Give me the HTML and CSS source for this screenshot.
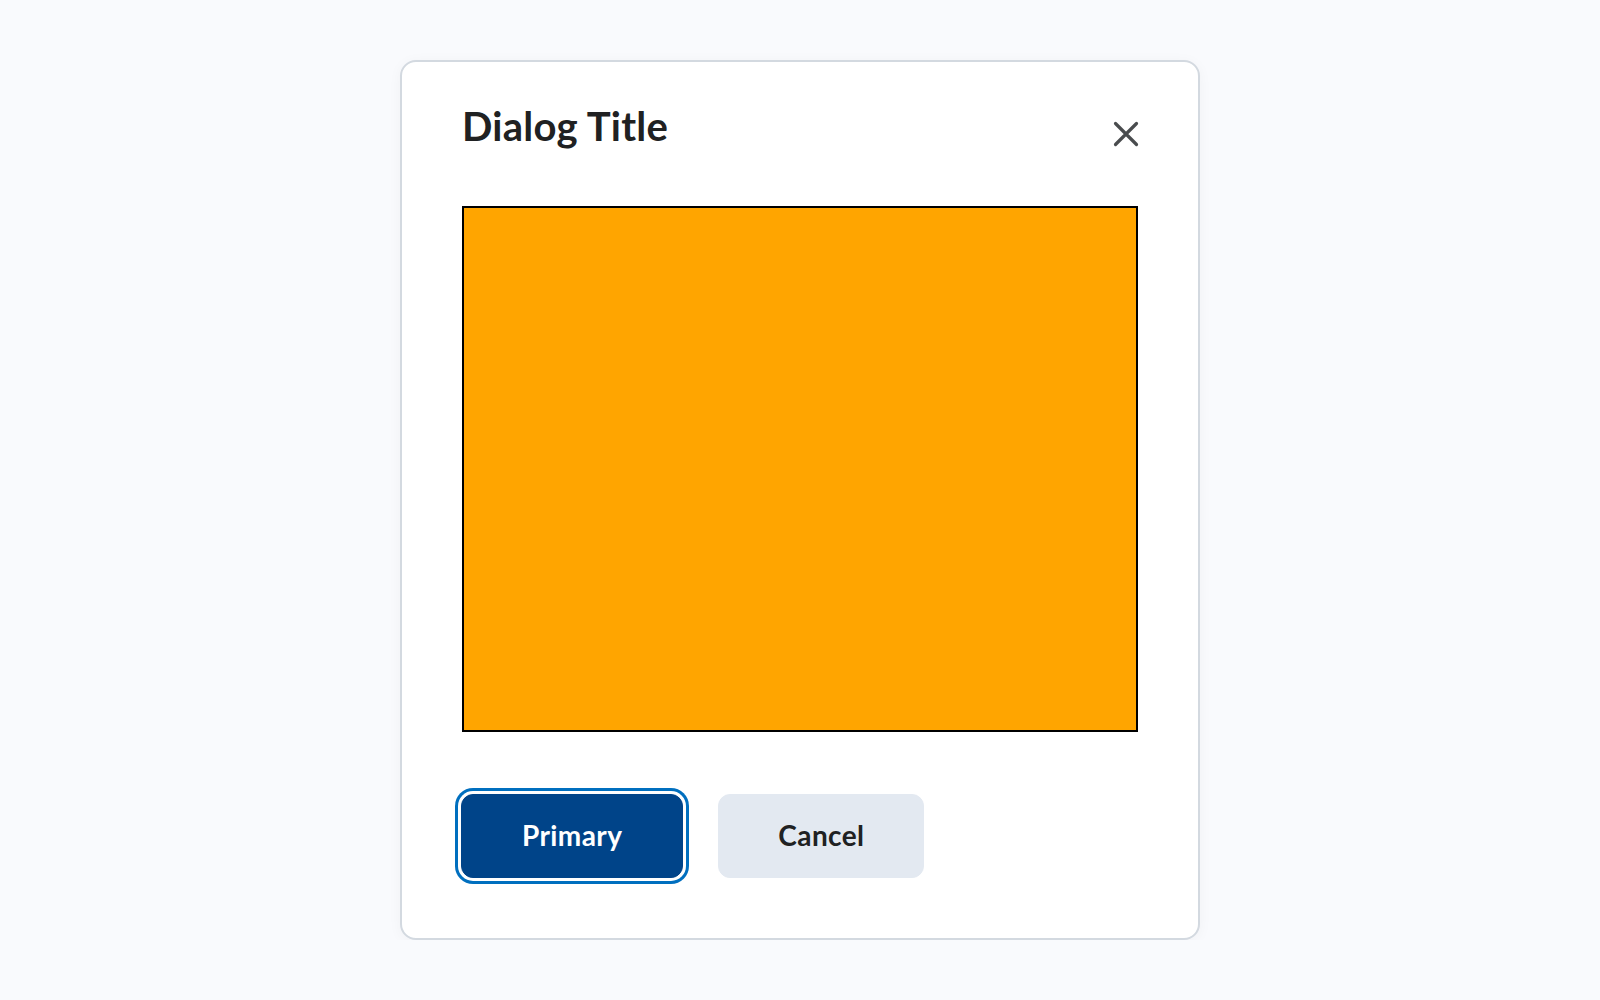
FILE: index.html
```html
<!DOCTYPE html>
<html lang="en">
<head>
<meta charset="utf-8">
<title>Dialog</title>
<link rel="stylesheet" href="styles.css">
</head>
<body>
<div class="dialog" role="dialog" aria-labelledby="dlg-title">
  <div class="dialog-header">
    <h2 class="dialog-title" id="dlg-title">Dialog Title</h2>
    <button class="close-btn" aria-label="Close">
      <svg width="26" height="26" viewBox="0 0 26 26" aria-hidden="true">
        <path d="M2.5 2.5 L23.5 23.5 M23.5 2.5 L2.5 23.5" stroke="#494c4e" stroke-width="3.2" stroke-linecap="round" fill="none"/>
      </svg>
    </button>
  </div>
  <div class="dialog-content">
    <div class="orange-box"></div>
  </div>
  <div class="dialog-footer">
    <button class="btn btn-primary">Primary</button>
    <button class="btn btn-secondary">Cancel</button>
  </div>
</div>
</body>
</html>
```

FILE: styles.css
```css
html, body {
  margin: 0;
  padding: 0;
}
body {
  background: #f9fafd;
  font-family: Lato, "Open Sans", "Liberation Sans", sans-serif;
  color: #202122;
  padding-top: 60px;
}
.dialog {
  box-sizing: border-box;
  width: 800px;
  margin: 0 auto;
  background: #ffffff;
  border: 2px solid #d3d9e0;
  border-radius: 16px;
  box-shadow: 0 2px 14px rgba(0, 0, 0, 0.04);
  padding: 40px 59px 60px 59px;
}
.dialog-header {
  display: flex;
  justify-content: space-between;
  align-items: flex-start;
  height: 48px;
}
.dialog-title {
  margin: 0 0 0 1px;
  font-size: 40px;
  line-height: 48px;
  font-weight: 700;
  letter-spacing: 0.25px;
  color: #202122;
}
.close-btn {
  width: 44px;
  height: 44px;
  margin: 10px -9px 0 0;
  padding: 0;
  border: none;
  background: transparent;
  display: flex;
  align-items: center;
  justify-content: center;
  cursor: pointer;
}
.close-btn svg {
  display: block;
}
.dialog-content {
  margin-top: 56px;
  padding: 0 1px;
}
.orange-box {
  box-sizing: border-box;
  height: 526px;
  background: #ffa500;
  border: 2px solid #000000;
}
.dialog-footer {
  margin-top: 62px;
  display: flex;
  gap: 35px;
}
.btn {
  box-sizing: border-box;
  height: 84px;
  padding: 19px 60px 21px 60px;
  border: 1px solid transparent;
  border-radius: 12px;
  font-family: Lato, "Open Sans", "Liberation Sans", sans-serif;
  font-size: 28px;
  line-height: 40px;
  font-weight: 700;
  letter-spacing: 0.4px;
  cursor: pointer;
}
.btn-primary {
  background: #004489;
  border-color: #004489;
  color: #ffffff;
  box-shadow: 0 0 0 3px #ffffff, 0 0 0 6px #006fbf;
}
.btn-secondary {
  background: #e3e9f1;
  border-color: #e3e9f1;
  color: #202122;
  padding-left: 59px;
  padding-right: 59px;
}
```
